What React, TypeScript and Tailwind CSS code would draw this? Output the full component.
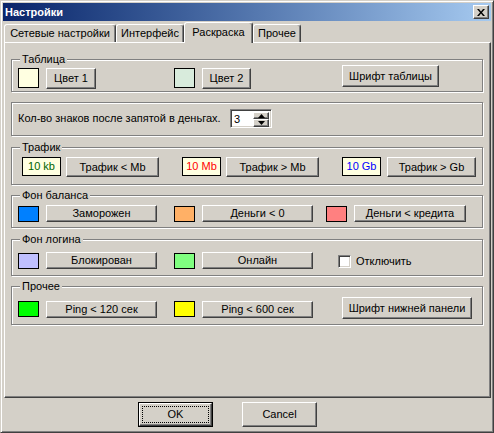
import type { ReactNode } from "react";

const raised =
  "border border-t-white border-l-white border-r-[#404040] border-b-[#404040] shadow-[inset_-1px_-1px_0_#808080]";
const sunken =
  "border border-t-[#808080] border-l-[#808080] border-r-white border-b-white shadow-[inset_1px_1px_0_#404040,inset_-1px_-1px_0_#D4D0C8]";

function Btn({ children, className = "" }: { children: ReactNode; className?: string }) {
  return (
    <div className={`${raised} flex shrink-0 items-center justify-center bg-[#D4D0C8] ${className}`}>
      {children}
    </div>
  );
}

function Swatch({ color, className = "" }: { color: string; className?: string }) {
  return <div className={`shrink-0 border border-black ${color} ${className}`} />;
}

function Label({ text, color, className = "" }: { text: string; color: string; className?: string }) {
  return (
    <div
      className={`flex h-[19px] w-[39px] shrink-0 items-center justify-center border border-black bg-[#FFFFE1] ${color} ${className}`}
    >
      {text}
    </div>
  );
}

function Group({
  legend,
  className = "",
  children,
}: {
  legend?: string;
  className?: string;
  children: ReactNode;
}) {
  return (
    <div
      className={`ml-[6px] flex w-[472px] flex-col border border-[#808080] shadow-[1px_1px_0_#fff,inset_1px_1px_0_#fff] ${className}`}
    >
      {legend && (
        <span className="-mt-[7px] ml-[8px] self-start bg-[#D4D0C8] px-[2px] leading-[13px]">{legend}</span>
      )}
      {children}
    </div>
  );
}

function Tab({ label, active, className }: { label: string; active?: boolean; className: string }) {
  return (
    <div
      className={`flex shrink-0 items-center justify-center rounded-t-[3px] border-l border-t border-r border-l-white border-t-white border-r-[#404040] bg-[#D4D0C8] shadow-[inset_-1px_0_0_#808080] ${
        active ? "relative z-10 -mb-[1px] h-[21px] pb-[2px]" : "h-[18px]"
      } ${className}`}
    >
      {label}
    </div>
  );
}

function Arrow({ up }: { up?: boolean }) {
  return (
    <svg width="7" height="4" viewBox="0 0 7 4">
      <polygon points={up ? "3.5,0 7,4 0,4" : "0,0 7,0 3.5,4"} fill="#000" />
    </svg>
  );
}

export default function App() {
  return (
    <div className="flex h-[433px] w-[494px] flex-col border border-t-[#D4D0C8] border-l-[#D4D0C8] border-r-[#404040] border-b-[#404040] bg-[#D4D0C8] p-[2px] font-['Liberation_Sans',Arial,sans-serif] text-[11px] text-black shadow-[inset_1px_1px_0_#fff,inset_-1px_-1px_0_#808080]">
      {/* title bar */}
      <div className="flex h-[18px] shrink-0 items-center bg-gradient-to-r from-[#0A246A] to-[#A6CAF0] pl-[2px] pr-[2px]">
        <span className="text-[11px] font-bold text-white">Настройки</span>
        <Btn className="ml-auto h-[14px] w-[16px]">
          <svg width="8" height="7" viewBox="0 0 8 7">
            <path d="M0 0h2l2 2.5L6 0h2L5 3.5 8 7H6L4 4.5 2 7H0l3-3.5z" fill="#000" />
          </svg>
        </Btn>
      </div>

      {/* tabs */}
      <div className="mt-[1px] flex h-[20px] shrink-0 items-end pl-[1px]">
        <Tab label="Сетевые настройки" className="w-[112px]" />
        <Tab label="Интерфейс" className="w-[68px]" />
        <Tab label="Раскраска" active className="w-[69px]" />
        <Tab label="Прочее" className="w-[48px]" />
      </div>

      {/* panel */}
      <div className="ml-[1px] flex h-[356px] w-[487px] shrink-0 flex-col border border-t-white border-l-white border-r-[#404040] border-b-[#404040] shadow-[inset_-1px_-1px_0_#808080]">
        <Group legend="Таблица" className="mt-[16px] h-[33px]">
          <div className="mt-[2px] flex items-start">
            <Swatch color="bg-[#FFFFE1]" className="ml-[6px] h-[20px] w-[21px]" />
            <Btn className="ml-[7px] h-[21px] w-[50px]">Цвет 1</Btn>
            <Swatch color="bg-[#D8EBDC]" className="ml-[78px] h-[20px] w-[21px]" />
            <Btn className="ml-[7px] h-[21px] w-[49px]">Цвет 2</Btn>
            <Btn className="-mt-[3px] ml-[91px] h-[22px] w-[97px]">Шрифт таблицы</Btn>
          </div>
        </Group>

        <Group className="mt-[10px] h-[34px]">
          <div className="mt-[6px] flex h-[19px] items-center">
            <span className="ml-[6px]">Кол-во знаков после запятой в деньгах.</span>
            <div className={`${sunken} ml-auto mr-[210px] flex h-[19px] w-[42px] bg-white p-[2px]`}>
              <span className="flex-1 pl-[1px] leading-[15px]">3</span>
              <div className="flex w-[16px] flex-col">
                <Btn className="h-[7px] w-[16px]">
                  <Arrow up />
                </Btn>
                <Btn className="h-[8px] w-[16px]">
                  <Arrow />
                </Btn>
              </div>
            </div>
          </div>
        </Group>

        <Group legend="Трафик" className="mt-[11px] h-[38px]">
          <div className="mt-[3px] flex items-start">
            <Label text="10 kb" color="text-[#006400]" className="ml-[10px]" />
            <Btn className="ml-[5px] h-[20px] w-[93px]">Трафик &lt; Mb</Btn>
            <Label text="10 Mb" color="text-[#FF0000]" className="ml-[23px]" />
            <Btn className="ml-[5px] h-[20px] w-[93px]">Трафик &gt; Mb</Btn>
            <Label text="10 Gb" color="text-[#0000FF]" className="ml-[23px]" />
            <Btn className="ml-[6px] h-[20px] w-[89px]">Трафик &gt; Gb</Btn>
          </div>
        </Group>

        <Group legend="Фон баланса" className="mt-[10px] h-[33px]">
          <div className="mt-[3px] flex items-start">
            <Swatch color="bg-[#0080FF]" className="ml-[6px] mt-[1px] h-[16px] w-[21px]" />
            <Btn className="ml-[7px] h-[17px] w-[111px]">Заморожен</Btn>
            <Swatch color="bg-[#FFB066]" className="ml-[17px] mt-[1px] h-[16px] w-[21px]" />
            <Btn className="ml-[7px] h-[17px] w-[111px]">Деньги &lt; 0</Btn>
            <Swatch color="bg-[#FF8080]" className="ml-[13px] mt-[1px] h-[16px] w-[21px]" />
            <Btn className="ml-[7px] h-[17px] w-[112px]">Деньги &lt; кредита</Btn>
          </div>
        </Group>

        <Group legend="Фон логина" className="mt-[11px] h-[37px]">
          <div className="mt-[6px] flex items-start">
            <Swatch color="bg-[#C0C0FF]" className="ml-[6px] mt-[1px] h-[16px] w-[21px]" />
            <Btn className="ml-[7px] h-[17px] w-[111px]">Блокирован</Btn>
            <Swatch color="bg-[#80FF80]" className="ml-[17px] mt-[1px] h-[16px] w-[21px]" />
            <Btn className="ml-[7px] h-[17px] w-[111px]">Онлайн</Btn>
            <div className={`${sunken} ml-[25px] mt-[3px] h-[13px] w-[13px] shrink-0 bg-white`} />
            <span className="ml-[5px] mt-[2px] leading-[15px]">Отключить</span>
          </div>
        </Group>

        <Group legend="Прочее" className="mt-[10px] h-[39px]">
          <div className="mt-[8px] flex items-start">
            <Swatch color="bg-[#00FF00]" className="ml-[6px] h-[16px] w-[21px]" />
            <Btn className="ml-[7px] h-[17px] w-[111px]">Ping &lt; 120 сек</Btn>
            <Swatch color="bg-[#FFFF00]" className="ml-[17px] h-[16px] w-[21px]" />
            <Btn className="ml-[7px] h-[17px] w-[111px]">Ping &lt; 600 сек</Btn>
            <Btn className="-mt-[4px] ml-[29px] h-[22px] w-[130px]">Шрифт нижней панели</Btn>
          </div>
        </Group>
      </div>

      {/* dialog buttons */}
      <div className="mt-[4px] flex">
        <div className="ml-[135px] flex h-[25px] w-[75px] border border-black">
          <div className={`${raised} flex flex-1 p-[2px]`}>
            <div className="flex flex-1 items-center justify-center border border-dotted border-black">OK</div>
          </div>
        </div>
        <Btn className="ml-[29px] h-[25px] w-[75px]">Cancel</Btn>
      </div>
    </div>
  );
}
